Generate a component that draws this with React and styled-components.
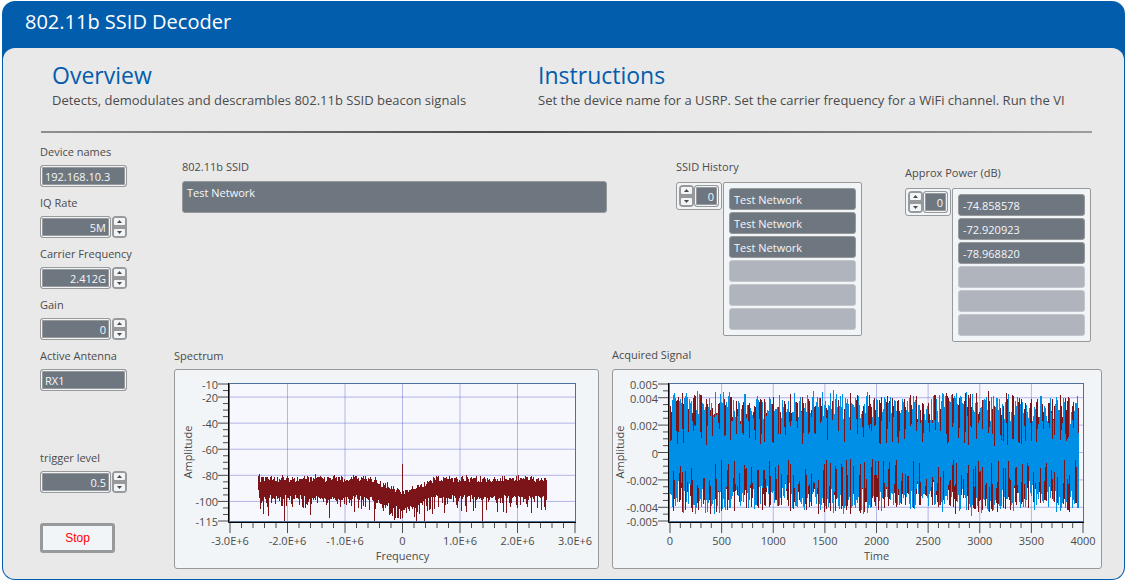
/** @format */
import React, { useState } from "react";
import styled, { createGlobalStyle } from "styled-components";

const GlobalStyle = createGlobalStyle`
  * {
    box-sizing: border-box;
  }
  body {
    margin: 0;
    background: #ffffff;
    color: #4b4b4b;
    font-family: "Open Sans", "Noto Sans", sans-serif;
    font-size: 11px;
  }
  input, textarea, button {
    font-family: inherit;
    font-size: inherit;
    margin: 0;
  }
`;

// small repeatable noise source so the traces look the same on every load
function makeNoise(seed) {
  let s = seed;
  return () => {
    s = (s * 16807) % 2147483647;
    return s / 2147483647;
  };
}

const range = (from, to, step) => {
  const out = [];
  for (let v = from; v <= to + step / 100; v += step) {
    out.push(v);
  }
  return out;
};

// [column, depth] of the deep nulls in the spectrum
const NULLS = [
  [2, 509], [5, 514], [10, 516], [17, 504], [26, 521], [34, 507], [52, 515],
  [71, 518], [96, 512], [100, 508], [116, 521], [133, 513], [139, 518],
  [142, 519], [144, 518], [158, 521], [166, 521], [174, 514], [180, 507],
  [186, 513], [203, 511], [208, 512], [215, 511], [224, 521], [239, 512],
  [248, 513], [258, 505], [273, 513], [279, 508], [283, 510],
];

function spectrumPath() {
  const rnd = makeNoise(4211);
  const nulls = new Map(NULLS);
  let d = "";
  for (let i = 0; i < 289; i++) {
    const dist = Math.abs(i - 144);
    const dip = dist < 34 ? (1 - dist / 34) * 13 : 0;
    let top = 475 + dip + rnd() * 6 + (rnd() < 0.12 ? -1 : 1);
    let bottom = 495 + dip + rnd() * 5;
    if (rnd() < 0.45) bottom += rnd() * 12;
    if (nulls.has(i)) bottom = nulls.get(i);
    if (i === 144) top = 464;
    if (i === 0) bottom = 490;
    bottom = Math.min(bottom, 521);
    d += `M${258.5 + i} ${Math.round(top)}V${Math.round(bottom)}`;
  }
  return d;
}

function signalPaths() {
  const rnd = makeNoise(90173);
  let blue = "";
  let red = "";
  for (let i = 0; i < 409; i++) {
    const x = 670.5 + i;
    const swell = 56 + 3 * Math.sin(i / 21) + rnd() * 5;
    const side = (shift) => {
      const beat = (i + shift) % 6;
      const low = beat === 0 || (beat === 1 && rnd() < 0.7) || rnd() < 0.12;
      const b = low ? 6 + rnd() * 30 : swell * (0.4 + 0.6 * Math.sqrt(rnd()));
      const r = low ? swell * (0.6 + 0.4 * Math.sqrt(rnd())) : 22 + rnd() * 20;
      return [Math.round(b), Math.round(r)];
    };
    const [bu, ru] = side(0);
    const [bd, rd] = side(3);
    blue += `M${x} ${452 - bu}V${453 + bd}`;
    red += `M${x} ${452 - ru}V${453 + rd}`;
  }
  return { blue, red };
}

const SIGNAL = signalPaths();

const SPECTRUM = {
  left: 230,
  right: 575,
  offset: 175,
  width: 423,
  x: { min: -3e6, max: 3e6, minor: 2e5, major: range(-3e6, 3e6, 1e6), title: "Frequency" },
  y: { min: -115, max: -10, minor: 5, grid: [-20, -40, -60, -80, -100] },
  traces: [{ color: "#7b151a", d: spectrumPath() }],
  xText: (v) => (v === 0 ? "0" : `${(v / 1e6).toFixed(1)}E+6`),
  yText: (v) => `${v}`,
  yTitle: 189,
};

const ACQUIRED = {
  left: 670,
  right: 1083,
  offset: 613,
  width: 488,
  x: { min: 0, max: 4000, minor: 100, major: range(0, 4000, 500), title: "Time" },
  y: { min: -5, max: 5, minor: 0.5, grid: [4, 2, 0, -2, -4] },
  traces: [
    { color: "#7b151a", d: SIGNAL.red },
    { color: "#008fe6", d: SIGNAL.blue },
  ],
  xText: (v) => `${v}`,
  yText: (v) => `${v / 1000}`,
  yTitle: 621,
};

const TOP = 384;
const BOTTOM = 521;

function Graph({ plot, label }) {
  const { left, right, x, y } = plot;
  const px = (v) => left + ((v - x.min) / (x.max - x.min)) * (right - left);
  const py = (v) => BOTTOM - ((v - y.min) / (y.max - y.min)) * (BOTTOM - TOP);
  const yMajor = [y.max, ...y.grid, y.min];
  return (
    <GraphSvg
      viewBox={`${plot.offset} 370 ${plot.width} 198`}
      role='img'
      aria-label={label}>
      <rect x={left - 1} y='383' width={right - left + 2} height='139' fill='#f6f8fd' />
      <g stroke='#6464d2' strokeOpacity='0.45'>
        {x.major.slice(1, -1).map((v) => (
          <line key={v} x1={px(v)} x2={px(v)} y1={TOP} y2={BOTTOM} />
        ))}
        {y.grid.map((v) => (
          <line key={v} x1={left} x2={right} y1={py(v)} y2={py(v)} />
        ))}
      </g>
      <rect
        x={left - 0.5}
        y='383.5'
        width={right - left + 1}
        height='138'
        fill='none'
        stroke='#50709c'
      />
      {plot.traces.map((t) => (
        <path key={t.color} d={t.d} stroke={t.color} />
      ))}
      <path d={`M${left - 1.5} 383V522.5H${right + 1}`} fill='none' stroke='#000000' />
      <g stroke='#4b4b4b'>
        {range(x.min, x.max, x.minor).map((v) => (
          <line key={v} x1={px(v)} x2={px(v)} y1='523' y2='528' />
        ))}
        {x.major.map((v) => (
          <line key={v} x1={px(v)} x2={px(v)} y1='528' y2='533' />
        ))}
        {range(y.min, y.max, y.minor).map((v) => (
          <line key={v} x1={left - 7} x2={left - 2} y1={py(v)} y2={py(v)} />
        ))}
        {yMajor.map((v) => (
          <line key={v} x1={left - 12} x2={left - 7} y1={py(v)} y2={py(v)} />
        ))}
      </g>
      {yMajor.map((v) => (
        <text key={v} x={left - 12} y={py(v) + 5} textAnchor='end'>
          {plot.yText(v)}
        </text>
      ))}
      {x.major.map((v) => (
        <text key={v} x={px(v)} y='545' textAnchor='middle'>
          {plot.xText(v)}
        </text>
      ))}
      <text x={(left + right) / 2} y='560' textAnchor='middle'>
        {x.title}
      </text>
      <text
        transform={`translate(${plot.yTitle + 3} 452) rotate(-90)`}
        textAnchor='middle'>
        Amplitude
      </text>
    </GraphSvg>
  );
}

function Spinner({ name, onUp, onDown }) {
  return (
    <SpinnerBox>
      <button type='button' aria-label={`${name} up`} onClick={onUp}>
        <svg width='5' height='3' viewBox='0 0 5 3'>
          <path d='M0 3L2.5 0L5 3Z' fill='#4b4b4b' />
        </svg>
      </button>
      <button type='button' aria-label={`${name} down`} onClick={onDown}>
        <svg width='5' height='3' viewBox='0 0 5 3'>
          <path d='M0 0L2.5 3L5 0Z' fill='#4b4b4b' />
        </svg>
      </button>
    </SpinnerBox>
  );
}

function TextControl({ id, label, initial }) {
  const [value, setValue] = useState(initial);
  return (
    <Control>
      <Label htmlFor={id}>{label}</Label>
      <Field id={id} value={value} onChange={(e) => setValue(e.target.value)} />
    </Control>
  );
}

function NumberControl({ id, label, initial, step = 1, unit = "" }) {
  const [value, setValue] = useState(initial);
  const change = (by) => setValue((prev) => Number((prev + by).toFixed(3)));
  return (
    <Control>
      <Label htmlFor={id}>{label}</Label>
      <NumberRow>
        <Field
          id={id}
          $right
          value={`${value}${unit}`}
          onChange={(e) => setValue(parseFloat(e.target.value) || 0)}
        />
        <Spinner name={label} onUp={() => change(step)} onDown={() => change(-step)} />
      </NumberRow>
    </Control>
  );
}

function ArrayIndicator({ id, label, values, size = 6 }) {
  const [index, setIndex] = useState(0);
  const rows = Array.from({ length: size }, (_, i) => values[index + i]);
  return (
    <div>
      <Label htmlFor={id} $gap={6}>
        {label}
      </Label>
      <ArrayRow>
        <IndexBox>
          <Spinner
            name={`${label} index`}
            onUp={() => setIndex(index + 1)}
            onDown={() => setIndex(Math.max(0, index - 1))}
          />
          <Field
            id={id}
            $right
            value={index}
            onChange={(e) => setIndex(parseInt(e.target.value, 10) || 0)}
          />
        </IndexBox>
        <ArrayList>
          {rows.map((row, i) => (
            <ArrayItem key={i} $empty={row === undefined}>
              {row}
            </ArrayItem>
          ))}
        </ArrayList>
      </ArrayRow>
    </div>
  );
}

function App() {
  return (
    <>
      <GlobalStyle />
      <Window>
        <Title>802.11b SSID Decoder</Title>
        <Body>
          <Intro>
            <section>
              <Heading>Overview</Heading>
              <Blurb>
                Detects, demodulates and descrambles 802.11b SSID beacon signals
              </Blurb>
            </section>
            <section>
              <Heading>Instructions</Heading>
              <Blurb>
                Set the device name for a USRP. Set the carrier frequency for a
                WiFi channel. Run the VI
              </Blurb>
            </section>
          </Intro>
          <Rule />
          <Panel>
            <Sidebar>
              <TextControl id='device' label='Device names' initial='192.168.10.3' />
              <NumberControl id='iq' label='IQ Rate' initial={5} unit='M' />
              <NumberControl
                id='carrier'
                label='Carrier Frequency'
                initial={2.412}
                step={0.005}
                unit='G'
              />
              <NumberControl id='gain' label='Gain' initial={0} />
              <TextControl id='antenna' label='Active Antenna' initial='RX1' />
              <Trigger>
                <NumberControl
                  id='trigger'
                  label='trigger level'
                  initial={0.5}
                  step={0.1}
                />
              </Trigger>
              <StopButton type='button'>Stop</StopButton>
            </Sidebar>
            <Main>
              <Results>
                <SsidBlock>
                  <Label htmlFor='ssid' $gap={5}>
                    802.11b SSID
                  </Label>
                  <SsidField id='ssid' readOnly value='Test Network' />
                </SsidBlock>
                <ArrayIndicator
                  id='history'
                  label='SSID History'
                  values={["Test Network", "Test Network", "Test Network"]}
                />
                <PowerBlock>
                  <ArrayIndicator
                    id='power'
                    label='Approx Power (dB)'
                    values={["-74.858578", "-72.920923", "-78.968820"]}
                  />
                </PowerBlock>
              </Results>
              <Graphs>
                <div>
                  <GraphTitle $gap={4}>Spectrum</GraphTitle>
                  <GraphPanel>
                    <Graph plot={SPECTRUM} label='Spectrum' />
                  </GraphPanel>
                </div>
                <div>
                  <GraphTitle $gap={5}>Acquired Signal</GraphTitle>
                  <GraphPanel>
                    <Graph plot={ACQUIRED} label='Acquired Signal' />
                  </GraphPanel>
                </div>
              </Graphs>
            </Main>
          </Panel>
        </Body>
      </Window>
    </>
  );
}

export default App;

const Window = styled.div`
  margin: 1px 2px 2px;
  padding: 0 1px 1px;
  background: #035dad;
  border-radius: 13px;
`;
const Title = styled.h1`
  margin: 0;
  padding: 6px 22px 11px;
  color: #ffffff;
  font-size: 20px;
  line-height: 30px;
  font-weight: normal;
`;
const Body = styled.div`
  padding: 11px 22px 10px 37px;
  background: #e9e9e9;
  border-radius: 12px;
`;
const Intro = styled.header`
  display: grid;
  grid-template-columns: 487fr 565fr;
  padding-left: 12px;
`;
const Heading = styled.h2`
  margin: 0;
  color: #035dad;
  font-size: 23px;
  line-height: 32px;
  font-weight: normal;
`;
const Blurb = styled.p`
  margin: 0;
  font-size: 13px;
  line-height: 18px;
  white-space: nowrap;
`;
const Rule = styled.hr`
  height: 2px;
  margin: 22px 10px 10px 1px;
  border: none;
  background: linear-gradient(90deg, #8d8f92, #4b4b4b 45%, #9b9d9f);
`;
const Panel = styled.div`
  display: grid;
  grid-template-columns: 134px 1fr;
`;
const Sidebar = styled.div`
  display: flex;
  flex-direction: column;
  align-items: flex-start;
  gap: 7px;
`;
const Control = styled.div`
  width: 87px;
`;
const Label = styled.label`
  display: block;
  margin-bottom: ${(props) => props.$gap || 4}px;
  line-height: 18px;
  white-space: nowrap;
`;
const GraphTitle = styled.h3`
  margin: 0 0 ${(props) => props.$gap}px;
  font-size: 11px;
  line-height: 18px;
  font-weight: normal;
`;
const Field = styled.input`
  width: 100%;
  min-width: 0;
  height: 22px;
  padding: 1px 4px 0;
  border: 1px solid #98999b;
  border-radius: 3px;
  outline: none;
  background: #6e7680;
  box-shadow: inset 0 0 0 1px #f1f5f8, inset 0 0 0 2px #98999b;
  color: #f4f7fa;
  text-align: ${(props) => (props.$right ? "right" : "left")};
`;
const NumberRow = styled.div`
  display: flex;
  gap: 1px;
`;
const SpinnerBox = styled.div`
  flex: none;
  display: flex;
  flex-direction: column;
  gap: 4px;
  width: 15px;
  height: 22px;
  padding: 2px;
  border-radius: 4px;
  background: #98999b;
  button {
    flex: 1;
    display: flex;
    align-items: center;
    justify-content: center;
    padding: 0;
    border: none;
    border-radius: 1px;
    background: #f1f5f8;
    cursor: pointer;
  }
`;
const Trigger = styled.div`
  margin-top: 51px;
`;
const StopButton = styled.button`
  width: 75px;
  height: 30px;
  margin-top: 23px;
  padding: 0;
  border: 3px solid #98999b;
  border-radius: 3px;
  background: #f1f5f8;
  color: #ff0000;
  font-family: "Liberation Sans", Arial, sans-serif;
  font-size: 12px;
  cursor: pointer;
`;
const Main = styled.main`
  min-width: 0;
`;
const Results = styled.div`
  display: flex;
  align-items: flex-start;
  padding: 15px 11px 0 8px;
`;
const SsidBlock = styled.div`
  flex: 1;
  min-width: 0;
  margin-right: 69px;
`;
const SsidField = styled.textarea`
  display: block;
  width: 100%;
  height: 32px;
  padding: 3px 4px;
  border: 1px solid #98999b;
  border-radius: 3px;
  outline: none;
  resize: none;
  overflow: hidden;
  background: #6e7680;
  color: #f4f7fa;
  line-height: 16px;
`;
const PowerBlock = styled.div`
  margin: 6px 0 0 43px;
`;
const ArrayRow = styled.div`
  display: flex;
  align-items: flex-start;
  gap: 1px;
`;
const IndexBox = styled.div`
  display: flex;
  width: 46px;
  padding: 2px;
  border: 1px solid #98999b;
  border-radius: 3px;
  background: #f1f5f8;
`;
const ArrayList = styled.ul`
  display: flex;
  flex-direction: column;
  gap: 2px;
  width: 139px;
  margin: 0;
  padding: 5px;
  border: 1px solid #98999b;
  border-radius: 2px;
  background: #f1f5f8;
  list-style: none;
`;
const ArrayItem = styled.li`
  height: 22px;
  padding: 1px 4px 0;
  border: 1px solid ${(props) => (props.$empty ? "#c3c6ca" : "#98999b")};
  border-radius: 3px;
  background: ${(props) => (props.$empty ? "#b0b4bc" : "#6e7680")};
  color: #f4f7fa;
  line-height: 20px;
`;
const Graphs = styled.div`
  display: grid;
  grid-template-columns: 425fr 490fr;
  align-items: end;
  gap: 13px;
  margin-top: 4px;
`;
const GraphPanel = styled.div`
  border: 1px solid #98999b;
  border-radius: 3px;
  background: #f1f5f8;
`;
const GraphSvg = styled.svg`
  display: block;
  width: 100%;
  height: auto;
  text {
    fill: #4b4b4b;
    font-size: 11px;
  }
`;
